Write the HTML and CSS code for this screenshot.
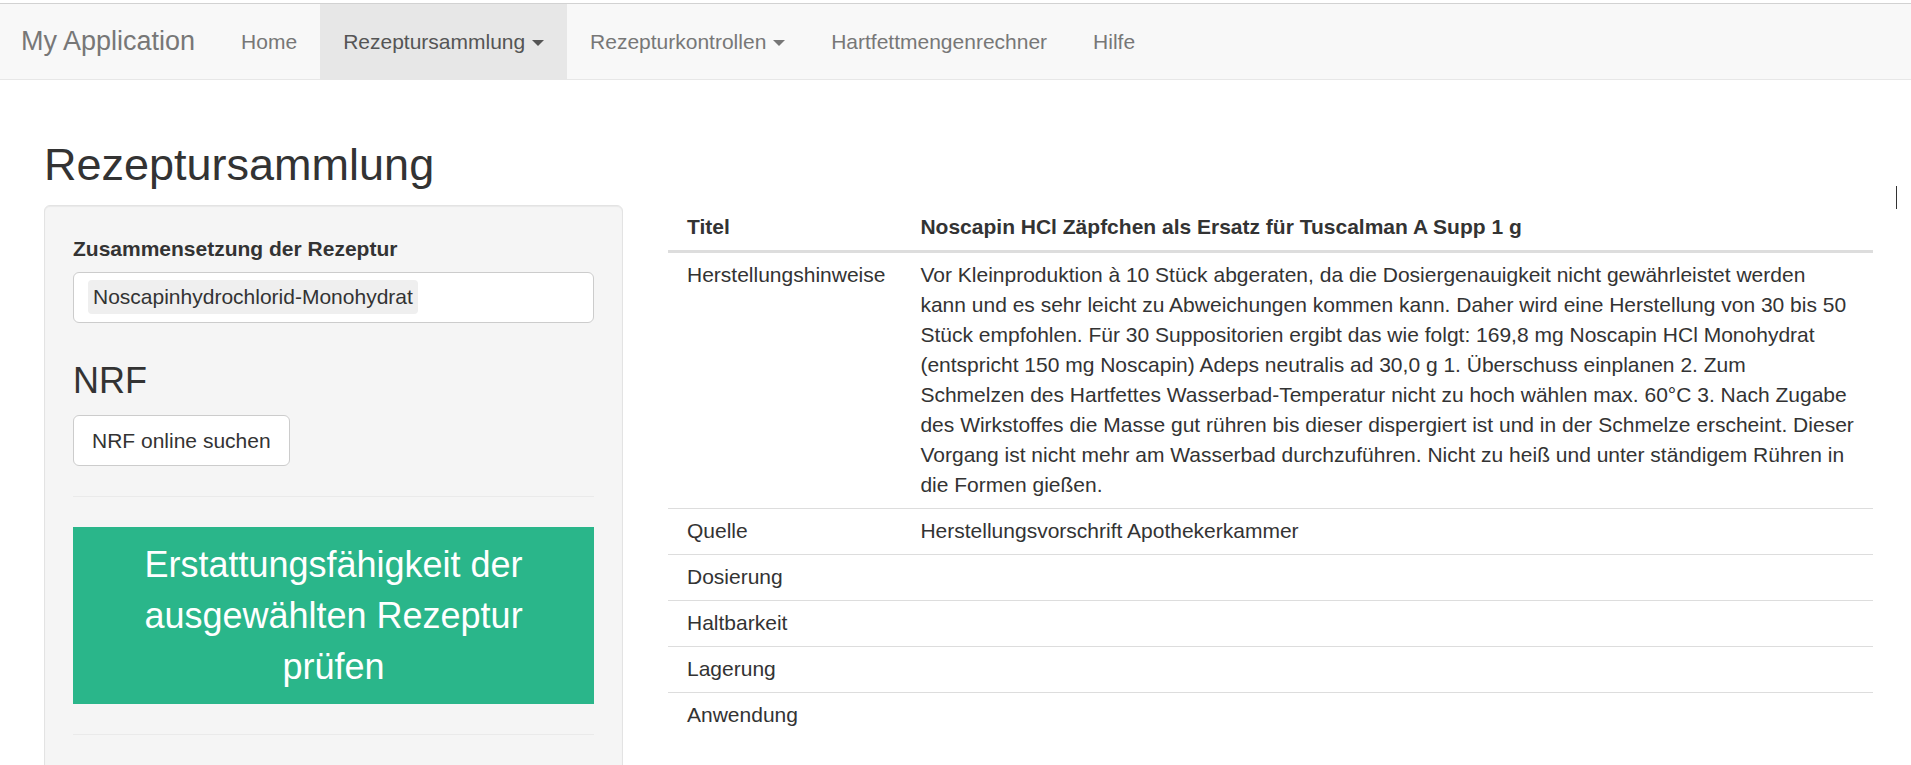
FILE: index.html
```html
<!DOCTYPE html>
<html lang="de">
<head>
<meta charset="utf-8">
<title>Rezeptursammlung</title>
<link rel="stylesheet" href="styles.css">
</head>
<body>
<nav class="navbar">
  <a class="brand" href="#">My Application</a>
  <ul class="nav">
    <li><a href="#">Home</a></li>
    <li class="active"><a href="#">Rezeptursammlung <span class="caret"></span></a></li>
    <li><a href="#">Rezepturkontrollen <span class="caret"></span></a></li>
    <li><a href="#">Hartfettmengenrechner</a></li>
    <li><a href="#">Hilfe</a></li>
  </ul>
</nav>

<main class="container">
  <h2 class="page-title">Rezeptursammlung</h2>
  <div class="row">
    <aside class="well">
      <div class="form-group">
        <label class="label">Zusammensetzung der Rezeptur</label>
        <div class="tag-input">
          <span class="tag">Noscapinhydrochlorid-Monohydrat</span>
        </div>
      </div>
      <h3 class="sub-title">NRF</h3>
      <button class="btn" type="button">NRF online suchen</button>
      <hr class="sep">
      <button class="btn-check" type="button">Erstattungsfähigkeit der ausgewählten Rezeptur prüfen</button>
      <hr class="sep">
      <div class="well-tail"></div>
    </aside>

    <section class="details">
      <table class="detail-table">
        <thead>
          <tr><th>Titel</th><th>Noscapin HCl Zäpfchen als Ersatz für Tuscalman A Supp 1 g</th></tr>
        </thead>
        <tbody>
          <tr><td>Herstellungshinweise</td><td class="long">Vor Kleinproduktion à 10 Stück abgeraten, da die Dosiergenauigkeit nicht gewährleistet werden<br>kann und es sehr leicht zu Abweichungen kommen kann. Daher wird eine Herstellung von 30 bis 50<br>Stück empfohlen. Für 30 Suppositorien ergibt das wie folgt: 169,8 mg Noscapin HCl Monohydrat<br>(entspricht 150 mg Noscapin) Adeps neutralis ad 30,0 g 1. Überschuss einplanen 2. Zum<br>Schmelzen des Hartfettes Wasserbad-Temperatur nicht zu hoch wählen max. 60°C 3. Nach Zugabe<br>des Wirkstoffes die Masse gut rühren bis dieser dispergiert ist und in der Schmelze erscheint. Dieser<br>Vorgang ist nicht mehr am Wasserbad durchzuführen. Nicht zu heiß und unter ständigem Rühren in<br>die Formen gießen.</td></tr>
          <tr><td>Quelle</td><td>Herstellungsvorschrift Apothekerkammer</td></tr>
          <tr><td>Dosierung</td><td></td></tr>
          <tr><td>Haltbarkeit</td><td></td></tr>
          <tr><td>Lagerung</td><td></td></tr>
          <tr><td>Anwendung</td><td></td></tr>
        </tbody>
      </table>
    </section>
  </div>
</main>
<div class="text-cursor"></div>
</body>
</html>
```

FILE: styles.css
```css
html, body {
  overflow: hidden;
}
body {
  margin: 0;
  padding-top: 3px;
  background: #fff;
  color: #333;
  font-family: "Liberation Sans", Arial, Helvetica, sans-serif;
  font-size: 21px;
  line-height: 30px;
  height: 762px;
  position: relative;
}

/* Navbar */
.navbar {
  display: flex;
  align-items: stretch;
  height: 75px;
  background: #f8f8f8;
  border-top: 1px solid #d2d2d2;
  border-bottom: 1px solid #e7e7e7;
}
.brand {
  display: block;
  padding: 0 23px 0 21px;
  font-size: 27px;
  line-height: 75px;
  color: #777;
  text-decoration: none;
}
.nav {
  display: flex;
  margin: 0;
  padding: 0;
  list-style: none;
}
.nav li a {
  display: block;
  padding: 0 23px;
  line-height: 75px;
  color: #777;
  text-decoration: none;
}
.nav li.active a {
  background: #e7e7e7;
  color: #555;
}
.caret {
  display: inline-block;
  width: 0;
  height: 0;
  margin-left: 1px;
  vertical-align: middle;
  border-top: 6px solid;
  border-left: 6px solid transparent;
  border-right: 6px solid transparent;
}

/* Main */
.container {
  padding: 0 38px 0 44px;
}
.page-title {
  margin: 60px 0 15px;
  font-size: 45px;
  line-height: 49.5px;
  font-weight: 500;
  color: #333;
}
.row {
  display: grid;
  grid-template-columns: 579px 1205px;
  column-gap: 45px;
  align-items: start;
}

/* Left well */
.well {
  background: #f5f5f5;
  border: 1px solid #e3e3e3;
  border-radius: 6px;
  padding: 28px 28px 0;
  box-shadow: inset 0 1px 1px rgba(0, 0, 0, 0.05);
  min-height: 700px;
}
.label {
  display: block;
  font-weight: bold;
  margin-bottom: 8px;
}
.tag-input {
  box-sizing: border-box;
  height: 51px;
  background: #fff;
  border: 1px solid #ccc;
  border-radius: 6px;
  padding: 7px 14px;
}
.tag {
  display: inline-block;
  background: #efefef;
  border-radius: 4px;
  padding: 0 5px;
  line-height: 34px;
  color: #333;
}
.sub-title {
  margin: 38px 0 15px;
  font-size: 36px;
  line-height: 39.6px;
  font-weight: 500;
}
.btn {
  display: inline-block;
  box-sizing: border-box;
  height: 51px;
  padding: 0 18px;
  background: #fff;
  border: 1px solid #ccc;
  border-radius: 6px;
  font-family: inherit;
  font-size: 21px;
  line-height: 49px;
  color: #333;
}
.sep {
  margin: 30px 0;
  border: 0;
  border-top: 1px solid #eaeaea;
}
.btn-check {
  display: block;
  width: 100%;
  padding: 12px 30px;
  background: #2ab68a;
  border: 0;
  border-radius: 0;
  color: #fff;
  font-family: inherit;
  font-size: 36px;
  line-height: 51px;
  text-align: center;
}
.well-tail {
  height: 60px;
}

/* Table */
.detail-table {
  width: 100%;
  border-collapse: collapse;
  border-spacing: 0;
}
.detail-table th,
.detail-table td {
  padding: 7.5px 8px 7.5px 19px;
  text-align: left;
  vertical-align: top;
  line-height: 30px;
}
.detail-table th:first-child,
.detail-table td:first-child {
  width: 190px;
  padding-right: 16px;
  white-space: nowrap;
}
.detail-table td.long {
  white-space: nowrap;
}
.detail-table th {
  font-weight: bold;
  border-bottom: 3px solid #ddd;
}
.detail-table td {
  border-top: 1px solid #ddd;
}
.detail-table tbody tr:first-child td {
  border-top: 0;
}

.text-cursor {
  position: absolute;
  left: 1896px;
  top: 186px;
  width: 1px;
  height: 23px;
  background: #333;
}
```
